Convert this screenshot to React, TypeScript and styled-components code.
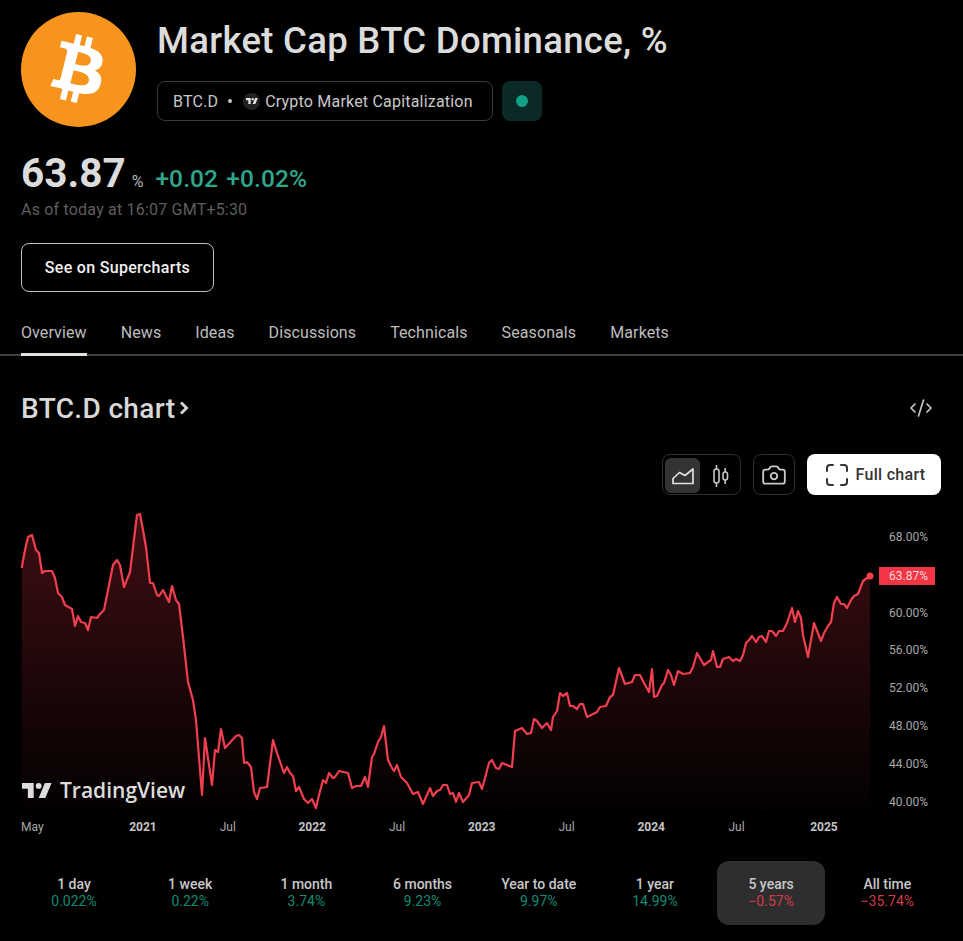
import React from "react";
import styled, { createGlobalStyle } from "styled-components";
import { Camera, CodeXml } from "lucide-react";

const GlobalStyle = createGlobalStyle`
  html, body {
    margin: 0;
    background: #000;
  }
  body {
    font-family: Roboto, "Liberation Sans", sans-serif;
    color: #dbdbdb;
  }
  * { box-sizing: border-box; }
`;

const Page = styled.div`
  width: 963px;
  height: 941px;
  overflow: hidden;
  background: #000;
`;

const Header = styled.header`
  display: flex;
  gap: 21px;
  padding: 12px 0 0 21px;
`;

const Logo = styled.div`
  flex: none;
  width: 115px;
  height: 115px;
  border-radius: 50%;
  background: #f7941d;
  display: flex;
  align-items: center;
  justify-content: center;
`;

const TitleBlock = styled.div`
  padding-top: 7px;
  display: flex;
  flex-direction: column;
  gap: 18px;
`;

const Title = styled.h1`
  margin: 0;
  font-size: 36.5px;
  line-height: 44px;
  font-weight: 500;
  letter-spacing: 0.3px;
  color: #dcdcdc;
`;

const ChipRow = styled.div`
  display: flex;
  gap: 9px;
`;

const Chip = styled.div`
  width: 336px;
  height: 40px;
  border: 1px solid #3a3a3a;
  border-radius: 8px;
  display: flex;
  align-items: center;
  padding-left: 15px;
  font-size: 16px;
  letter-spacing: 0.2px;
  color: #c8c8c8;
`;

const ChipDot = styled.span`
  width: 4px;
  height: 4px;
  border-radius: 50%;
  background: #c8c8c8;
  margin: 0 11px 0 10px;
`;

const ChipLogo = styled.span`
  width: 17px;
  height: 17px;
  border-radius: 50%;
  background: #222;
  display: flex;
  align-items: center;
  justify-content: center;
  margin-right: 5px;
`;

const StatusBox = styled.div`
  width: 40px;
  height: 40px;
  border-radius: 8px;
  background: #0b2926;
  display: flex;
  align-items: center;
  justify-content: center;
`;

const StatusDot = styled.span`
  width: 12px;
  height: 12px;
  border-radius: 50%;
  background: #12a184;
`;

const Quote = styled.section`
  padding: 22px 0 0 21px;
`;

const PriceRow = styled.div`
  display: flex;
  align-items: baseline;
  height: 48px;
  line-height: 48px;
`;

const Price = styled.span`
  font-size: 40.5px;
  font-weight: 700;
  color: #dcdcdc;
`;

const Unit = styled.span`
  font-size: 16px;
  color: #b5b5b5;
  margin: 0 12px 0 6px;
`;

const Change = styled.span`
  font-size: 24.5px;
  font-weight: 500;
  letter-spacing: 0.1px;
  word-spacing: 2px;
  color: #2fa68a;
`;

const AsOf = styled.div`
  margin-top: 3px;
  font-size: 16px;
  line-height: 20px;
  letter-spacing: 0.2px;
  color: #5e5e5e;
`;

const SuperButton = styled.button`
  display: block;
  margin-top: 23px;
  width: 193px;
  height: 49px;
  background: #000;
  border: 1px solid #bdbdbd;
  border-radius: 8px;
  color: #f2f2f2;
  font-family: inherit;
  font-size: 16px;
  font-weight: 500;
  letter-spacing: 0.3px;
`;

const Tabs = styled.nav`
  margin-top: 20px;
  height: 44px;
  padding-left: 21px;
  display: flex;
  gap: 34px;
  border-bottom: 2px solid #3f3f3f;
`;

const Tab = styled.div<{ $active?: boolean }>`
  height: 44px;
  line-height: 41px;
  font-size: 16px;
  letter-spacing: 0.1px;
  color: #bdbdbd;
  border-bottom: 3px solid ${(p) => (p.$active ? "#e0e0e0" : "transparent")};
`;

const ChartHeading = styled.div`
  margin-top: 32px;
  padding: 0 30px 0 21px;
  height: 40px;
  display: flex;
  align-items: center;
  justify-content: space-between;
  color: #c8c8c8;
`;

const ChartTitle = styled.h2`
  margin: 0;
  font-size: 28px;
  font-weight: 500;
  letter-spacing: 0.35px;
  color: #d8d8d8;
  display: flex;
  align-items: center;
  gap: 4px;
`;

const Toolbar = styled.div`
  margin-top: 26px;
  padding-right: 22px;
  display: flex;
  justify-content: flex-end;
  gap: 12px;
`;

const Segment = styled.div`
  width: 79px;
  height: 41px;
  border: 1px solid #2e2e2e;
  border-radius: 8px;
  padding: 3px 2px;
  display: flex;
  gap: 2px;
  color: #c8c8c8;
`;

const SegmentItem = styled.div<{ $active?: boolean }>`
  flex: none;
  width: 35px;
  height: 35px;
  border-radius: 6px;
  background: ${(p) => (p.$active ? "#333" : "transparent")};
  color: ${(p) => (p.$active ? "#e0e0e0" : "#c8c8c8")};
  display: flex;
  align-items: center;
  justify-content: center;
`;

const IconButton = styled.div`
  width: 42px;
  height: 41px;
  border: 1px solid #2e2e2e;
  border-radius: 8px;
  display: flex;
  align-items: center;
  justify-content: center;
  color: #c8c8c8;
`;

const FullChart = styled.div`
  width: 134px;
  height: 41px;
  padding-left: 3px;
  border-radius: 8px;
  background: #fff;
  color: #333;
  display: flex;
  align-items: center;
  justify-content: center;
  gap: 8px;
  font-size: 16px;
  font-weight: 500;
  letter-spacing: 0.3px;
`;

const ChartArea = styled.div`
  position: relative;
  margin-top: 5px;
  height: 317px;
  display: flex;
`;

const Plot = styled.svg`
  display: block;
  flex: none;
`;

const Watermark = styled.div`
  position: absolute;
  left: 22px;
  top: 276px;
  display: flex;
  align-items: center;
  gap: 8px;
  color: #dcdcdc;
  font-family: "Open Sans", Roboto, sans-serif;
  font-size: 21px;
  font-weight: 600;
  line-height: 28px;
`;

const YAxis = styled.div`
  flex: 1;
  padding: 28px 0 0 9px;
  display: flex;
  flex-direction: column;
`;

const YLabel = styled.div`
  flex: none;
  width: 40px;
  height: 37.8px;
  font-size: 12px;
  line-height: 18px;
  color: #a8a8a8;
  white-space: nowrap;
`;

const PriceTag = styled.div`
  position: absolute;
  left: 879px;
  top: 67px;
  width: 56px;
  height: 18px;
  background: #f23645;
  color: #f6d7da;
  font-size: 12px;
  line-height: 18px;
  padding-left: 10px;
`;

const XAxis = styled.div`
  height: 20px;
  padding-left: 21px;
  display: flex;
  font-size: 12px;
  line-height: 20px;
`;

const XLabel = styled.div<{ $w: number; $bold?: boolean; $left?: boolean }>`
  flex: none;
  width: ${(p) => p.$w}px;
  text-align: ${(p) => (p.$left ? "left" : "center")};
  font-weight: ${(p) => (p.$bold ? 700 : 400)};
  color: ${(p) => (p.$bold ? "#c4c4c4" : "#a8a8a8")};
`;

const Stats = styled.div`
  margin-top: 24px;
  padding-left: 20px;
  display: flex;
  gap: 8.2px;
`;

const Stat = styled.div<{ $active?: boolean }>`
  width: 108px;
  height: 64px;
  border-radius: 12px;
  background: ${(p) => (p.$active ? "#2e2e2e" : "transparent")};
  display: flex;
  flex-direction: column;
  align-items: center;
  justify-content: center;
  font-size: 14px;
  line-height: 17.5px;
`;

const StatName = styled.div`
  font-weight: 500;
  color: #c8c8c8;
`;

const StatValue = styled.div<{ $down?: boolean }>`
  color: ${(p) => (p.$down ? "#d23b4a" : "#0f8a74")};
`;

const BitcoinMark = () => (
  <svg width="109" height="109" viewBox="0 0 64 64" fill="#fff">
    <path d="M46.11 27.44c.64-4.27-2.62-6.57-7.07-8.1l1.44-5.78-3.52-.88-1.4 5.63c-.93-.23-1.88-.45-2.83-.66l1.41-5.66-3.52-.88-1.44 5.78c-.77-.18-1.52-.35-2.25-.53l-4.85-1.21-.94 3.76s2.61.6 2.56.63c1.43.36 1.68 1.3 1.64 2.05l-1.64 6.58c.1.03.23.06.37.12l-.37-.09-2.3 9.22c-.17.43-.62 1.08-1.61.83.04.05-2.56-.64-2.56-.64l-1.75 4.03 4.58 1.14c.85.21 1.68.44 2.5.65l-1.46 5.84 3.52.88 1.44-5.78c.96.26 1.9.5 2.81.73l-1.44 5.75 3.52.88 1.46-5.83c6 1.14 10.52.68 12.42-4.75 1.53-4.37-.08-6.9-3.23-8.54 2.3-.53 4.03-2.04 4.49-5.16zM38.07 38.72c-1.09 4.38-8.47 2.01-10.86 1.42l1.94-7.76c2.39.6 10.06 1.78 8.92 6.34zm1.09-11.35c-.99 3.99-7.14 1.96-9.13 1.46l1.76-7.04c1.99.5 8.41 1.43 7.37 5.58z" />
  </svg>
);

const TvMark = ({ width, color }: { width: number; color: string }) => (
  <svg width={width} viewBox="0 0 36 18" fill={color}>
    <path d="M14 18H7V7H0V0h14v18zM28 18h-8L27.5 0h8L28 18z" />
    <circle cx="20" cy="3.5" r="3.5" />
  </svg>
);

const AreaIcon = () => (
  <svg width="24" height="18" viewBox="0 0 24 18" fill="none" stroke="currentColor" strokeWidth="1.7" strokeLinejoin="round">
    <path d="M2 16.5V11.5L8.5 5.5L14 8.5L22 2V16.5H2Z" />
  </svg>
);

const CandleIcon = () => (
  <svg width="18" height="24" viewBox="0 0 18 24" fill="none" stroke="currentColor" strokeWidth="1.6">
    <rect x="3" y="5" width="5" height="14" rx="2.5" />
    <path d="M5.5 1v4M5.5 19v4" />
    <rect x="12" y="8" width="4.5" height="8" rx="2.2" />
    <path d="M14.2 4v4M14.2 16v4" />
  </svg>
);

const FullIcon = () => (
  <svg width="22" height="22" viewBox="0 0 22 22" fill="none" stroke="#333" strokeWidth="2" strokeLinecap="round">
    <path d="M1 7V4a3 3 0 0 1 3-3h3M15 1h3a3 3 0 0 1 3 3v3M21 15v3a3 3 0 0 1-3 3h-3M7 21H4a3 3 0 0 1-3-3v-3" />
  </svg>
);

const Chevron = () => (
  <svg width="10" height="16" viewBox="0 0 10 16" fill="none" stroke="#d8d8d8" strokeWidth="2.8">
    <path d="M2 2.5L7.5 8L2 13.5" />
  </svg>
);

const points = `21.7,568 25,550 28,537 32,535 36,550 39,553 42,573 45,571 52,571 55,578 58,593 62,597 65,605 72,609 75,626 78,616 81,622 85,623 88,630 91,617 97,618 100,614 104,610 113,565 117,560 120,565 124,587 130,572 137,515 140,514 143,530 146,547 150,583 153,583 157,595 159,596 163,590 169,602 172,586 176,600 179,604 183,637 188,682 193,700 196,720 202,795 205,738 212,785 215,750 218,752 221,729 225,748 236,736 239,735 242,738 244,763 247,762 251,767 254,792 257,799 260,788 267,787 273,740 277,753 284,773 287,767 290,773 293,776 296,791 299,787 304,799 308,803 312,799 316,808 319,795 323,780 326,783 329,773 333,778 335,777 339,771 348,773 352,788 356,786 361,786 365,777 368,787 372,757 374,754 378,742 381,737 384,726 388,760 392,768 394,771 397,765 401,777 407,783 413,794 418,792 423,804 430,788 433,796 437,791 440,790 443,785 447,785 450,794 453,793 456,802 459,793 463,802 469,795 472,783 479,782 482,789 489,763 492,760 496,768 499,769 502,763 512,767 515,731 522,728 527,734 531,733 534,719 537,721 542,728 547,723 551,730 553,717 557,711 560,693 563,696 567,693 570,706 573,706 577,709 580,704 583,704 587,717 597,712 600,707 606,706 610,697 613,695 619,668 625,684 632,682 635,675 640,675 644,683 649,692 652,669 654,697 657,696 662,685 664,683 668,670 671,675 674,685 678,671 683,674 690,673 693,667 697,653 704,665 708,662 711,660 713,651 717,667 720,667 723,659 729,657 733,661 736,659 740,661 743,655 746,643 749,640 752,636 756,642 759,637 762,636 766,642 769,631 772,631 776,636 779,631 783,631 787,623 792,608 795,622 798,611 801,618 803,635 808,657 814,623 821,641 824,633 828,626 831,622 834,603 837,597 841,604 844,604 847,608 851,600 854,596 858,594 863,581 867,578 870,576`;

const xLabels = [
  { text: "May", w: 79.5, left: true },
  { text: "2021", w: 85, bold: true },
  { text: "Jul", w: 84.5 },
  { text: "2022", w: 84.5, bold: true },
  { text: "Jul", w: 85 },
  { text: "2023", w: 84.5, bold: true },
  { text: "Jul", w: 85 },
  { text: "2024", w: 84.5, bold: true },
  { text: "Jul", w: 86 },
  { text: "2025", w: 89, bold: true },
];

const yLabels = ["68.00%", "", "60.00%", "56.00%", "52.00%", "48.00%", "44.00%", "40.00%"];

const tabs = ["Overview", "News", "Ideas", "Discussions", "Technicals", "Seasonals", "Markets"];

const stats = [
  { name: "1 day", value: "0.022%" },
  { name: "1 week", value: "0.22%" },
  { name: "1 month", value: "3.74%" },
  { name: "6 months", value: "9.23%" },
  { name: "Year to date", value: "9.97%" },
  { name: "1 year", value: "14.99%" },
  { name: "5 years", value: "−0.57%", down: true, active: true },
  { name: "All time", value: "−35.74%", down: true },
];

export default function App() {
  return (
    <Page>
      <GlobalStyle />
      <Header>
        <Logo>
          <BitcoinMark />
        </Logo>
        <TitleBlock>
          <Title>Market Cap BTC Dominance, %</Title>
          <ChipRow>
            <Chip>
              BTC.D
              <ChipDot />
              <ChipLogo>
                <TvMark width={12} color="#e6e6e6" />
              </ChipLogo>
              Crypto Market Capitalization
            </Chip>
            <StatusBox>
              <StatusDot />
            </StatusBox>
          </ChipRow>
        </TitleBlock>
      </Header>

      <Quote>
        <PriceRow>
          <Price>63.87</Price>
          <Unit>%</Unit>
          <Change>+0.02 +0.02%</Change>
        </PriceRow>
        <AsOf>As of today at 16:07 GMT+5:30</AsOf>
        <SuperButton>See on Supercharts</SuperButton>
      </Quote>

      <Tabs>
        {tabs.map((t, i) => (
          <Tab key={t} $active={i === 0}>
            {t}
          </Tab>
        ))}
      </Tabs>

      <ChartHeading>
        <ChartTitle>
          BTC.D chart
          <Chevron />
        </ChartTitle>
        <CodeXml size={24} strokeWidth={1.7} />
      </ChartHeading>

      <Toolbar>
        <Segment>
          <SegmentItem $active>
            <AreaIcon />
          </SegmentItem>
          <SegmentItem>
            <CandleIcon />
          </SegmentItem>
        </Segment>
        <IconButton>
          <Camera size={26} strokeWidth={1.7} />
        </IconButton>
        <FullChart>
          <FullIcon />
          Full chart
        </FullChart>
      </Toolbar>

      <ChartArea>
        <Plot width={880} height={317} viewBox="0 500 880 317">
          <defs>
            <linearGradient id="areaFill" gradientUnits="userSpaceOnUse" x1="0" y1="514" x2="0" y2="812">
              <stop offset="0" stopColor="#f23645" stopOpacity="0.26" />
              <stop offset="1" stopColor="#f23645" stopOpacity="0.01" />
            </linearGradient>
          </defs>
          <polygon points={`21.7,812 ${points} 870,812`} fill="url(#areaFill)" />
          <polyline points={points} fill="none" stroke="#f23f50" strokeWidth="2.2" strokeLinejoin="round" />
          <circle cx="870" cy="576" r="3.5" fill="#f23f50" />
        </Plot>
        <YAxis>
          {yLabels.map((y, i) => (
            <YLabel key={i}>{y}</YLabel>
          ))}
        </YAxis>
        <PriceTag>63.87%</PriceTag>
        <Watermark>
          <TvMark width={30} color="#dcdcdc" />
          TradingView
        </Watermark>
      </ChartArea>

      <XAxis>
        {xLabels.map((x, i) => (
          <XLabel key={i} $w={x.w} $bold={x.bold} $left={x.left}>
            {x.text}
          </XLabel>
        ))}
      </XAxis>

      <Stats>
        {stats.map((s) => (
          <Stat key={s.name} $active={s.active}>
            <StatName>{s.name}</StatName>
            <StatValue $down={s.down}>{s.value}</StatValue>
          </Stat>
        ))}
      </Stats>
    </Page>
  );
}
